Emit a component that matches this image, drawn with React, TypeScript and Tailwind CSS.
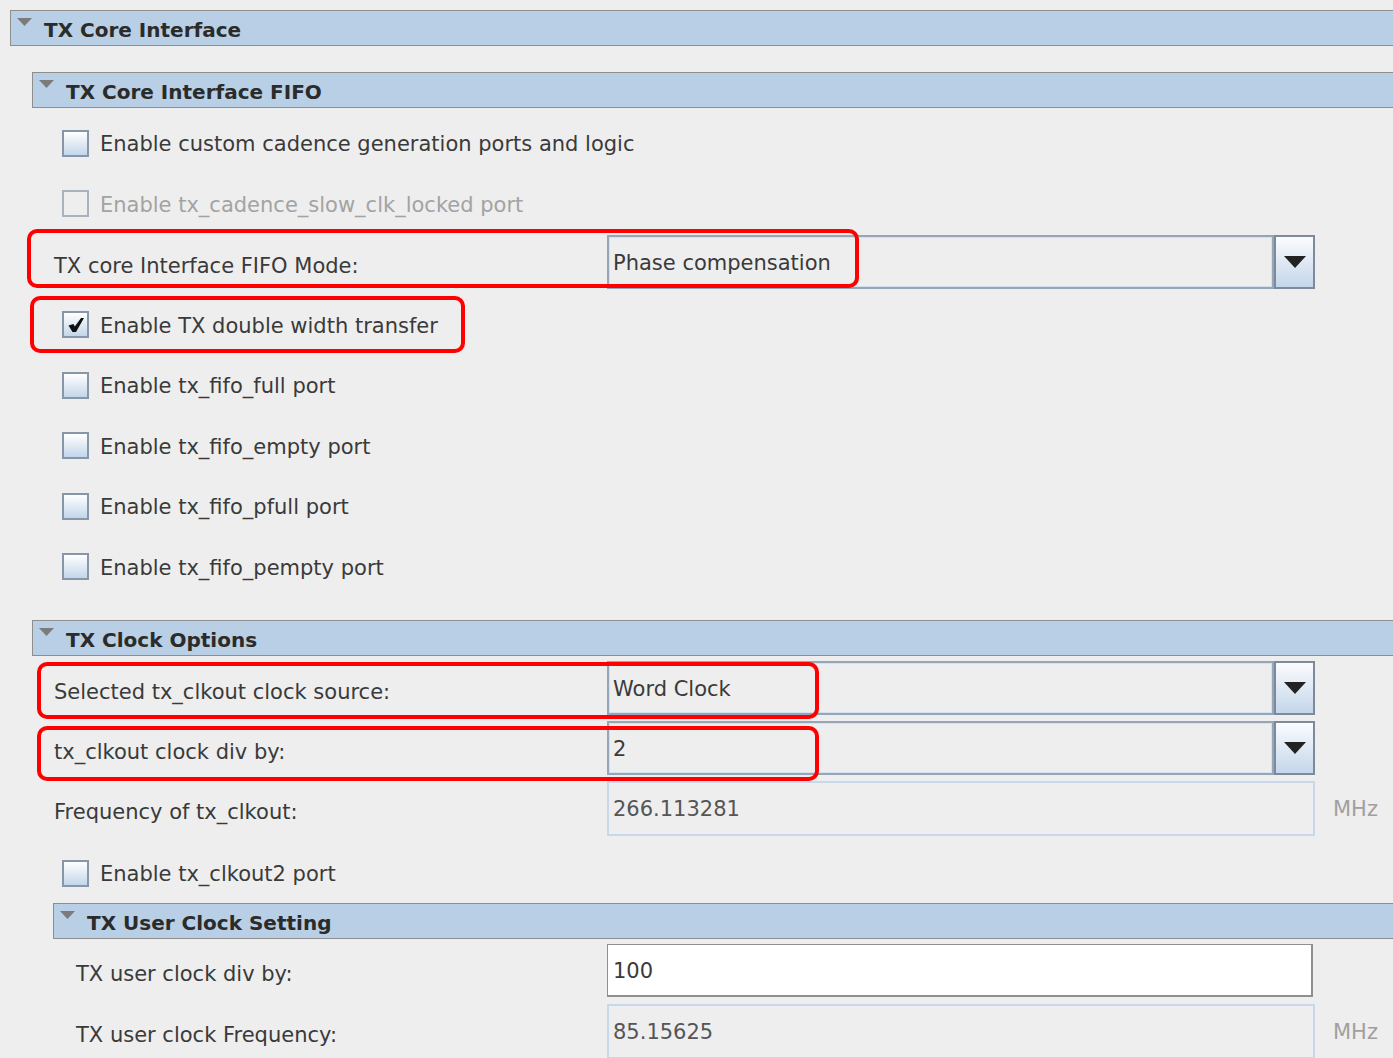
import React from "react";

const FONT = { fontFamily: '"DejaVu Sans", "Liberation Sans", Arial, sans-serif' };

function SectionHeader({ title }: { title: string }) {
  return (
    <div className="h-[36px] flex items-center border border-r-0 border-[#8e8e8e] bg-[#b8cfe5]">
      <svg width="15" height="9" viewBox="0 0 15 9" className="ml-[6px] mb-[12px] shrink-0">
        <polygon points="0,0 15,0 7.5,8" fill="#7b7b7b" />
      </svg>
      <span className="ml-[12px] pt-[3px] text-[20px] font-bold text-[#2b2b2b]">{title}</span>
    </div>
  );
}

function Checkbox({ checked, disabled }: { checked?: boolean; disabled?: boolean }) {
  if (disabled) {
    return <div className="w-[27px] h-[27px] border-2 border-[#a9b3bd] bg-[#eeeeee] shrink-0" />;
  }
  return (
    <div className="w-[27px] h-[27px] border-2 border-[#8797a9] bg-gradient-to-b from-[#ffffff] to-[#c3d6ea] shrink-0 flex items-center justify-center">
      {checked && (
        <svg width="18" height="18" viewBox="0 0 18 18">
          <path d="M1.5 9.5 L6.5 8 L7.8 10.5 L14 2 L17 2 L9 16 L5.5 16 Z" fill="#111" />
        </svg>
      )}
    </div>
  );
}

function CheckRow({ label, checked, disabled }: { label: string; checked?: boolean; disabled?: boolean }) {
  return (
    <div className="h-[60.5px] flex items-center pl-[30px] gap-[11px]">
      <Checkbox checked={checked} disabled={disabled} />
      <span className={`pt-[3px] text-[21px] ${disabled ? "text-[#a3a3a3]" : "text-[#3a3a3a]"}`}>{label}</span>
    </div>
  );
}

function Dropdown({ value }: { value: string }) {
  return (
    <div className="w-[708px] h-[54px] flex">
      <div className="flex-1 border-2 border-[#95a6b9] bg-[#eeeeee] flex items-center">
        <div className="w-full h-full border border-[#d3e0ee] flex items-center pl-[3px]">
          <span className="pt-[4px] text-[21px] text-[#3a3a3a]">{value}</span>
        </div>
      </div>
      <div className="w-[41px] border-2 border-[#7c8a9b] bg-gradient-to-b from-[#fbfcfe] to-[#c4d6ea] flex items-center justify-center">
        <svg width="22" height="13" viewBox="0 0 22 13">
          <polygon points="0,0 22,0 11,12" fill="#222" />
        </svg>
      </div>
    </div>
  );
}

function ReadOnlyField({ value, unit }: { value: string; unit?: string }) {
  return (
    <div className="flex items-center">
      <div className="w-[708px] h-[55px] border-2 border-[#c7d8ea] bg-[#eeeeee] flex items-center pl-[4px]">
        <span className="pt-[3px] text-[21px] text-[#555555]">{value}</span>
      </div>
      {unit && <span className="ml-[18px] pt-[3px] text-[21px] text-[#a0a0a0]">{unit}</span>}
    </div>
  );
}

function LabelRow({
  label,
  labelWidth,
  pad,
  children,
  className = "",
}: {
  label: string;
  labelWidth: number;
  pad: number;
  children: React.ReactNode;
  className?: string;
}) {
  return (
    <div className={`flex items-center ${className}`}>
      <div
        className={`shrink-0 text-[21px] text-[#3a3a3a] pt-[9px] ${labelWidth === 575 ? "w-[575px]" : "w-[554px]"} ${
          pad === 22 ? "pl-[22px]" : "pl-[23px]"
        }`}
      >
        {label}
      </div>
      {children}
    </div>
  );
}

function RedMark({ className }: { className: string }) {
  return <div className={`absolute border-[4px] border-[#ff0000] rounded-[10px] pointer-events-none ${className}`} />;
}

export default function App() {
  return (
    <div className="relative w-[1393px] h-[1058px] overflow-hidden bg-[#eeeeee] pt-[10px] pl-[10px]" style={FONT}>
      <SectionHeader title="TX Core Interface" />

      <div className="ml-[22px] mt-[26px]">
        <SectionHeader title="TX Core Interface FIFO" />
        <div className="mt-[5px]">
          <CheckRow label="Enable custom cadence generation ports and logic" />
          <CheckRow label="Enable tx_cadence_slow_clk_locked port" disabled />
          <div className="h-[60.5px] flex items-start pt-[1px]">
            <LabelRow label="TX core Interface FIFO Mode:" labelWidth={575} pad={22}>
              <Dropdown value="Phase compensation" />
            </LabelRow>
          </div>
          <CheckRow label="Enable TX double width transfer" checked />
          <CheckRow label="Enable tx_fifo_full port" />
          <CheckRow label="Enable tx_fifo_empty port" />
          <CheckRow label="Enable tx_fifo_pfull port" />
          <CheckRow label="Enable tx_fifo_pempty port" />
        </div>

        <div className="mt-[23px]">
          <SectionHeader title="TX Clock Options" />
        </div>
        <LabelRow label="Selected tx_clkout clock source:" labelWidth={575} pad={22} className="mt-[5px]">
          <Dropdown value="Word Clock" />
        </LabelRow>
        <LabelRow label="tx_clkout clock div by:" labelWidth={575} pad={22} className="mt-[6px]">
          <Dropdown value="2" />
        </LabelRow>
        <LabelRow label="Frequency of tx_clkout:" labelWidth={575} pad={22} className="mt-[6px]">
          <ReadOnlyField value="266.113281" unit="MHz" />
        </LabelRow>
        <div className="mt-[7px]">
          <div className="h-[60px] flex items-center pl-[30px] gap-[11px]">
            <Checkbox />
            <span className="pt-[3px] text-[21px] text-[#3a3a3a]">Enable tx_clkout2 port</span>
          </div>
        </div>

        <div className="ml-[21px]">
          <SectionHeader title="TX User Clock Setting" />
          <LabelRow label="TX user clock div by:" labelWidth={554} pad={23} className="mt-[5px]">
            <div className="w-[706px] h-[53px] bg-white border-2 border-t border-l border-[#8f8f8f] flex items-center pl-[5px]">
              <span className="pt-[3px] text-[21px] text-[#3a3a3a]">100</span>
            </div>
          </LabelRow>
          <LabelRow label="TX user clock Frequency:" labelWidth={554} pad={23} className="mt-[7px]">
            <ReadOnlyField value="85.15625" unit="MHz" />
          </LabelRow>
        </div>
      </div>

      <RedMark className="left-[27px] top-[229px] w-[832px] h-[59px]" />
      <RedMark className="left-[30px] top-[296px] w-[435px] h-[57px]" />
      <RedMark className="left-[37px] top-[662px] w-[782px] h-[57px]" />
      <RedMark className="left-[37px] top-[726px] w-[782px] h-[55px]" />
    </div>
  );
}
